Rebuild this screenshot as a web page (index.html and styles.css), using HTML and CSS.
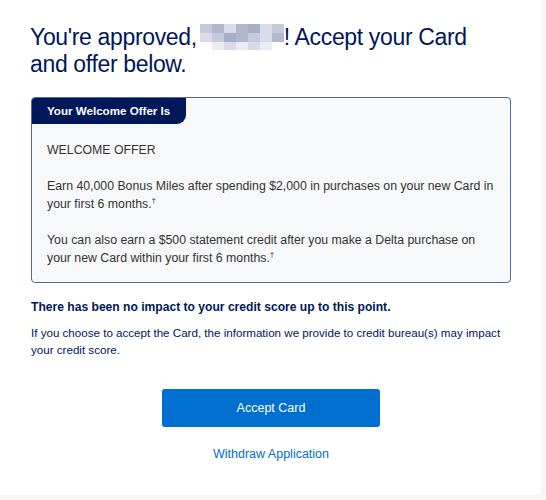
FILE: index.html
```html
<!DOCTYPE html>
<html lang="en">
<head>
<meta charset="utf-8">
<title>Accept your Card</title>
<link rel="stylesheet" href="styles.css">
</head>
<body>
<main class="page">
  <h1 class="title">You're approved, <span class="blur" aria-label="name hidden"><span class="px a"></span><span class="px b"></span><span class="px c"></span><span class="px b"></span><span class="px d"></span><span class="px c"></span><span class="px a"></span><span class="px c"></span><span class="px a"></span><span class="px d"></span><span class="px b"></span><span class="px a"></span><span class="px c"></span><span class="px b"></span><span class="px w"></span><span class="px e"></span><span class="px c"></span><span class="px e"></span><span class="px c"></span><span class="px e"></span><span class="px w"></span></span>! Accept your Card and offer below.</h1>

  <section class="offer">
    <div class="offer-tab">Your Welcome Offer Is</div>
    <div class="offer-body">
      <p>WELCOME OFFER</p>
      <p>Earn 40,000 Bonus Miles after spending $2,000 in purchases on your new Card in your first 6 months.<sup>†</sup></p>
      <p>You can also earn a $500 statement credit after you make a Delta purchase on your new Card within your first 6 months.<sup>†</sup></p>
    </div>
  </section>

  <p class="impact">There has been no impact to your credit score up to this point.</p>
  <p class="note">If you choose to accept the Card, the information we provide to credit bureau(s) may impact your credit score.</p>

  <div class="actions">
    <button class="btn-accept" type="button">Accept Card</button>
    <a class="link-withdraw" href="#">Withdraw Application</a>
  </div>
</main>
</body>
</html>
```

FILE: styles.css
```css
html, body {
  margin: 0;
  padding: 0;
}
body {
  background: #f6f6f6;
  font-family: "Liberation Sans", Arial, sans-serif;
  width: 546px;
  height: 500px;
  overflow: hidden;
}
.page {
  width: 541px;
  height: 495px;
  background: #ffffff;
  box-sizing: border-box;
  padding: 24px 36px 0 30px;
}
.title {
  margin: 0;
  font-weight: 400;
  font-size: 23px;
  line-height: 27px;
  color: #00175a;
  letter-spacing: -0.35px;
}
.blur {
  display: inline-grid;
  grid-template-columns: repeat(7, 12px);
  grid-template-rows: 9px 9px 8px;
  height: 26px;
  vertical-align: text-top;
  margin-left: -3px;
  line-height: 0;
}
.px.a { background: #c4c9db; }
.px.b { background: #b1b7ce; }
.px.c { background: #d9dce8; }
.px.d { background: #a7aec8; }
.px.e { background: #eaecf3; }
.px.w { background: #ffffff; }

.offer {
  margin-top: 19px;
  margin-left: 1px;
  width: 480px;
  box-sizing: border-box;
  border: 1px solid #56679b;
  border-radius: 4px;
  background: #f7f8f9;
  overflow: hidden;
}
.offer-tab {
  display: inline-block;
  background: #00175a;
  color: #ffffff;
  font-weight: 700;
  font-size: 11.6px;
  line-height: 26px;
  padding: 0 16px 0 15px;
  border-bottom-right-radius: 9px;
  vertical-align: top;
}
.offer-body {
  padding: 17px 10px 15px 15px;
}
.offer-body p {
  margin: 0 0 18px 0;
  font-size: 12.3px;
  line-height: 18px;
  color: #333333;
}
.offer-body p:last-child {
  margin-bottom: 0;
}
.offer-body sup {
  font-size: 8px;
  line-height: 0;
  vertical-align: 5px;
}
.impact {
  margin: 15px 0 0 1px;
  font-weight: 700;
  font-size: 12.1px;
  line-height: 18px;
  color: #00175a;
}
.note {
  margin: 8px 0 0 1px;
  font-size: 11.6px;
  line-height: 17px;
  color: #00175a;
}
.actions {
  display: flex;
  flex-direction: column;
  align-items: center;
  margin-top: 31px;
  padding-left: 7px;
}
.btn-accept {
  width: 218px;
  height: 38px;
  border: 0;
  border-radius: 3px;
  background: #006fcf;
  color: #ffffff;
  font-family: "Liberation Sans", Arial, sans-serif;
  font-size: 12.5px;
  padding: 0;
}
.link-withdraw {
  margin-top: 20px;
  font-size: 12.5px;
  line-height: 15px;
  color: #006fcf;
  text-decoration: none;
}
```
